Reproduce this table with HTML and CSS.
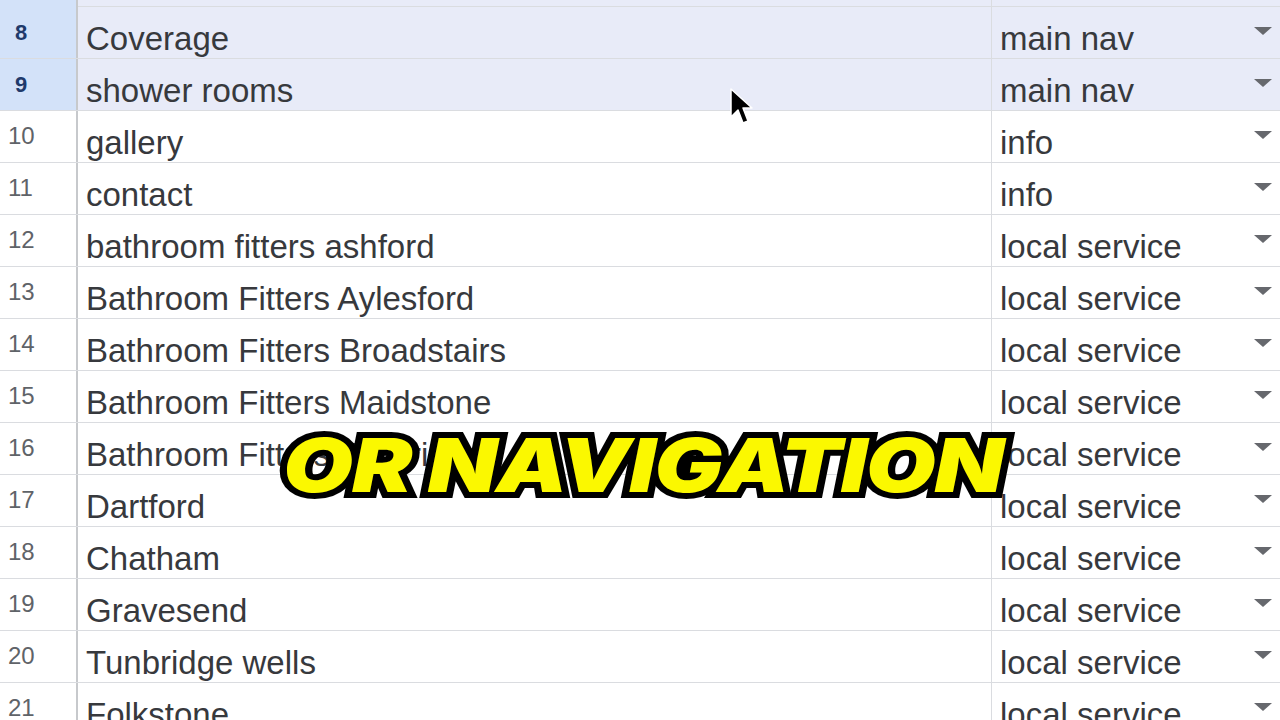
FILE: index.html
```html
<!DOCTYPE html>
<html>
<head>
<meta charset="utf-8">
<link rel="stylesheet" href="styles.css">
</head>
<body>
<div class="sheet">
  <div class="row sel partial"><div class="hdr"></div><div class="cell name"></div><div class="cell type"></div></div>
  <div class="row sel"><div class="hdr">8</div><div class="cell name">Coverage</div><div class="cell type">main nav<span class="dd"></span></div></div>
  <div class="row sel"><div class="hdr">9</div><div class="cell name">shower rooms</div><div class="cell type">main nav<span class="dd"></span></div></div>
  <div class="row"><div class="hdr">10</div><div class="cell name">gallery</div><div class="cell type">info<span class="dd"></span></div></div>
  <div class="row"><div class="hdr">11</div><div class="cell name">contact</div><div class="cell type">info<span class="dd"></span></div></div>
  <div class="row"><div class="hdr">12</div><div class="cell name">bathroom fitters ashford</div><div class="cell type">local service<span class="dd"></span></div></div>
  <div class="row"><div class="hdr">13</div><div class="cell name">Bathroom Fitters Aylesford</div><div class="cell type">local service<span class="dd"></span></div></div>
  <div class="row"><div class="hdr">14</div><div class="cell name">Bathroom Fitters Broadstairs</div><div class="cell type">local service<span class="dd"></span></div></div>
  <div class="row"><div class="hdr">15</div><div class="cell name">Bathroom Fitters Maidstone</div><div class="cell type">local service<span class="dd"></span></div></div>
  <div class="row"><div class="hdr">16</div><div class="cell name">Bathroom Fitters Tonbridge</div><div class="cell type">local service<span class="dd"></span></div></div>
  <div class="row"><div class="hdr">17</div><div class="cell name">Dartford</div><div class="cell type">local service<span class="dd"></span></div></div>
  <div class="row"><div class="hdr">18</div><div class="cell name">Chatham</div><div class="cell type">local service<span class="dd"></span></div></div>
  <div class="row"><div class="hdr">19</div><div class="cell name">Gravesend</div><div class="cell type">local service<span class="dd"></span></div></div>
  <div class="row"><div class="hdr">20</div><div class="cell name">Tunbridge wells</div><div class="cell type">local service<span class="dd"></span></div></div>
  <div class="row"><div class="hdr">21</div><div class="cell name">Folkstone</div><div class="cell type">local service<span class="dd"></span></div></div>
</div>
<div class="caption">OR NAVIGATION</div>
<svg class="cursor" width="26" height="40" viewBox="0 0 26 40"><path d="M2 2 L2 30 L9 23 L14 36 L19 34 L14 21 L23 21 Z" fill="#000" stroke="#fff" stroke-width="1.5" stroke-linejoin="round"/></svg>
</body>
</html>
```
FILE: styles.css
```css
html, body {
  margin: 0;
  padding: 0;
  width: 1280px;
  height: 720px;
  overflow: hidden;
  background: #fff;
}
.sheet {
  display: flex;
  flex-direction: column;
  font-family: "Liberation Sans", Arial, sans-serif;
  color: #37393d;
}
.row {
  display: flex;
  height: 52px;
  border-bottom: 1px solid #dadce0;
  box-sizing: border-box;
  flex-shrink: 0;
}
.row.partial {
  height: 7px;
}
.hdr {
  width: 78px;
  flex-shrink: 0;
  border-right: 2px solid #c7c9cc;
  box-sizing: border-box;
  background: #fff;
  color: #5f6368;
  font-size: 24px;
  line-height: 24px;
  padding-left: 8px;
  padding-top: 13px;
}
.sel .hdr {
  background: #d3e2f9;
  color: #1f3a6b;
  font-weight: bold;
  font-size: 22px;
  padding-left: 15px;
  padding-top: 14px;
}
.cell {
  font-size: 33px;
  line-height: 33px;
  display: flex;
  align-items: flex-end;
  padding-bottom: 3px;
  box-sizing: border-box;
  white-space: nowrap;
  overflow: hidden;
}
.name {
  width: 914px;
  flex-shrink: 0;
  padding-left: 8px;
  border-right: 1px solid #dadce0;
}
.type {
  flex: 1;
  padding-left: 8px;
  position: relative;
}
.sel .cell {
  background: #e8ebf8;
}
.dd {
  position: absolute;
  right: 8px;
  top: 20px;
  width: 0;
  height: 0;
  border-left: 9px solid transparent;
  border-right: 9px solid transparent;
  border-top: 8px solid #66686d;
}
.caption {
  position: absolute;
  left: 270px;
  top: 418px;
  width: 746px;
  text-align: center;
  font-family: "Inter", "Open Sans", sans-serif;
  font-weight: 900;
  font-style: italic;
  font-size: 74px;
  line-height: 94px;
  letter-spacing: -1px;
  color: #fbf800;
  -webkit-text-stroke: 12px #000;
  paint-order: stroke fill;
  text-shadow: -2px 4px 0 #000;
  transform: scaleX(1.22);
  transform-origin: 373px 50%;
}
.cursor {
  position: absolute;
  left: 729px;
  top: 87px;
}
```
